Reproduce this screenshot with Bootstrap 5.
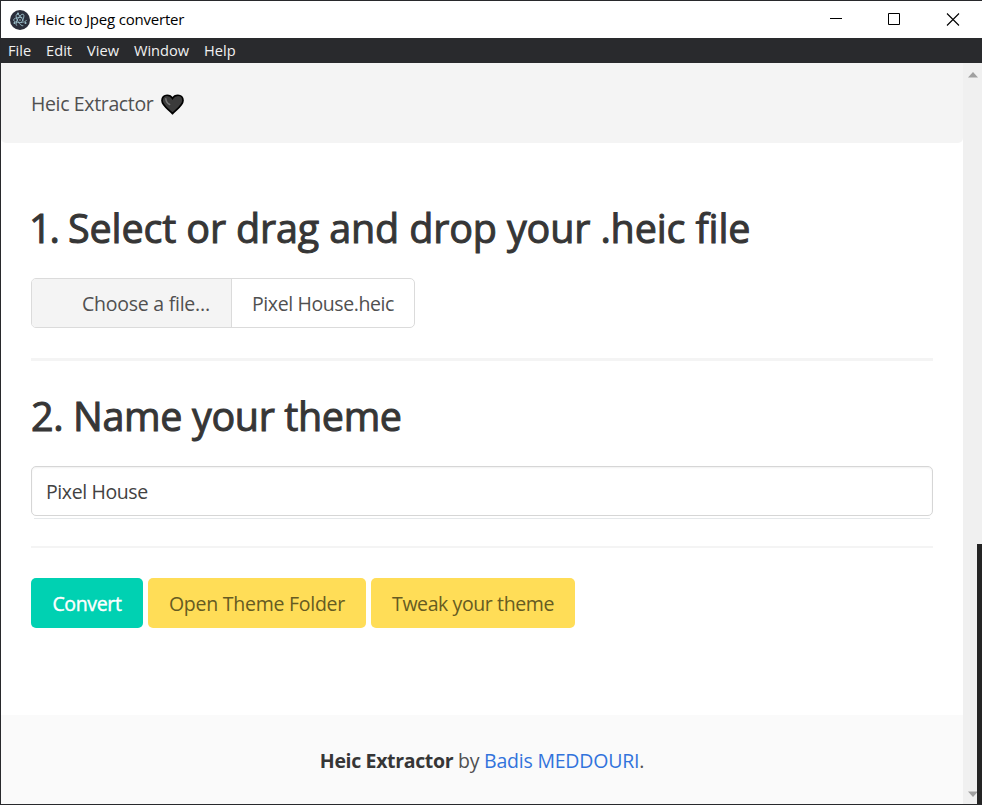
<!DOCTYPE html>
<html lang="en">
<head>
<meta charset="utf-8">
<title>Heic to Jpeg converter</title>
<link href="https://cdn.jsdelivr.net/npm/bootstrap@5.3.0/dist/css/bootstrap.min.css" rel="stylesheet">
<style>
body{font-family:"Open Sans","Noto Sans",sans-serif;font-size:19.5px;line-height:30px;color:#505050;background:#fff}
.app-window{height:805px;border:1px solid #28292c;border-right:0}
.title-bar{height:37px;color:#000;font-size:15px;padding-left:9px}
.title-bar .caption{letter-spacing:-.2px;margin:-2px 0 0 5px}
.controls{padding-right:22px;gap:44px}
.menu-bar{height:25px;background:#292a2d;color:#f1f1f1;font-size:14.6px;line-height:25px;padding-left:7px;gap:15px}
.pane{background:#fff}
.brand-bar{height:80px;background:#f4f4f4;border-radius:0 0 5px 5px;padding:2px 30px 0}
.brand-name{letter-spacing:-.36px}
.content{padding:60px 30px 0;height:572px}
.step-title{font-size:39.5px;line-height:50px;font-weight:400;color:#363636;margin:0;white-space:nowrap;-webkit-text-stroke:1px #363636}
.t1{letter-spacing:-.15px}
.n1{letter-spacing:-2px;margin-left:-2px}
.t2{letter-spacing:-.37px}
.file-picker{width:384px;height:50px;margin-top:25px;border:1px solid #dbdbdb;border-radius:5px;overflow:hidden}
.file-cta{width:200px;background:#f4f4f4;border-right:1px solid #dbdbdb;padding:2px 0 0 50px;letter-spacing:-.25px}
.file-label{padding:2px 0 0 20px;letter-spacing:-.4px}
.rule{background:#f4f4f4;height:3px;margin:30px 0 30px}
.rule-thin{height:2px;margin:27px 0 30px}
.theme-input{height:50px;margin-top:25px;border:1px solid #d6d6d6;border-radius:5px;padding:0 14px 0;font-size:19.5px;letter-spacing:-.4px;color:#424242;box-shadow:inset 0 1px 2px rgba(10,10,10,.06)}
.under-line{height:1px;background:#e5e8ea;margin:2px 3px 0}
.buttons{gap:5px}
.action{height:50px;border:0;border-radius:5px;padding:2px 0 0;font-size:19.5px;letter-spacing:-.25px}
.go{width:112px;background:#00d1b2;color:#fff;letter-spacing:-.35px;-webkit-text-stroke:.4px #fff}
.sun{background:#ffdd57;color:#665b22}
.w-open{width:218px}
.w-tweak{width:204px;letter-spacing:-.4px}
.site-footer{height:89px;background:#fafafa;padding-top:2px;letter-spacing:-.22px}
.site-footer strong{color:#363636;font-weight:700;letter-spacing:-.35px}
.site-footer a{color:#3273dc}
.scroll-track{width:19px;background:#f0f0f0;position:relative}
.scroll-track svg{position:absolute}
.arrow-up{left:5px;top:9px}.arrow-down{left:5px;bottom:7px}
.desk-edge{position:absolute;right:0;top:481px;bottom:0;width:5px;background:#242424}
</style>
</head>
<body>
<div class="app-window d-flex flex-column overflow-hidden">
  <header class="title-bar d-flex align-items-center">
    <svg width="20" height="20" viewBox="0 0 20 20"><circle cx="10" cy="10" r="10" fill="#2b2e3b"/><g fill="none" stroke="#9fc3cf" stroke-width=".8"><ellipse cx="10" cy="10" rx="6.5" ry="2.5" stroke-dasharray="24 5"/><ellipse cx="10" cy="10" rx="6.5" ry="2.5" transform="rotate(60 10 10)" stroke-dasharray="24 5"/><ellipse cx="10" cy="10" rx="6.5" ry="2.5" transform="rotate(120 10 10)" stroke-dasharray="24 5"/></g><g fill="#9fc3cf"><circle cx="10" cy="10" r=".8"/><circle cx="4.500" cy="13" r="1"/><circle cx="15.500" cy="13" r="1"/><circle cx="8" cy="3.600" r="1"/></g></svg>
    <span class="caption">Heic to Jpeg converter</span>
    <div class="controls d-flex ms-auto">
      <svg width="14" height="14"><path d="M0 5.500h12" stroke="#000"/></svg>
      <svg width="14" height="14"><path d="M.5.5h11v11H.5z" fill="none" stroke="#000"/></svg>
      <svg width="14" height="14"><path d="M1 0.500l12 12M13 .5L1 12.500" stroke="#000" stroke-width="1.100"/></svg>
    </div>
  </header>
  <nav class="menu-bar d-flex"><span>File</span><span>Edit</span><span>View</span><span>Window</span><span>Help</span></nav>
  <div class="d-flex flex-grow-1">
    <main class="pane flex-grow-1">
      <div class="brand-bar d-flex align-items-center">
        <span class="brand-name">Heic Extractor</span>
        <svg class="ms-2" width="23" height="21" viewBox="0 0 24 22"><path d="M12 20.500C8 16 1 12 1 6.800C1 3.500 3.300 1.300 6.300 1.300C9 1.300 11 2.800 12 4.500C13 2.800 15 1.300 17.700 1.300C20.700 1.300 23 3.500 23 6.800C23 12 16 16 12 20.500Z" fill="#3b3b3b" stroke="#000" stroke-width="1.800"/><path d="M5 5q.2 4 4 6" fill="none" stroke="#777" stroke-width="1.600" stroke-linecap="round"/></svg>
      </div>
      <div class="content">
        <h1 class="step-title"><span class="t1"><span class="n1">1.</span> Select or drag and drop your .heic file</span></h1>
        <div class="file-picker d-flex align-items-stretch">
          <div class="file-cta d-flex align-items-center">Choose a file…</div>
          <div class="file-label d-flex align-items-center">Pixel House.heic</div>
        </div>
        <div class="rule"></div>
        <h2 class="step-title"><span class="t2">2. Name your theme</span></h2>
        <input class="form-control theme-input" type="text" value="Pixel House">
        <div class="under-line"></div>
        <div class="rule rule-thin"></div>
        <div class="d-flex buttons">
          <button class="btn action go">Convert</button>
          <button class="btn action sun w-open">Open Theme Folder</button>
          <button class="btn action sun w-tweak">Tweak your theme</button>
        </div>
      </div>
      <footer class="site-footer d-flex align-items-center justify-content-center"><div><strong>Heic Extractor</strong> by <a href="#" class="text-decoration-none">Badis MEDDOURI</a>.</div></footer>
    </main>
    <aside class="scroll-track">
      <svg class="arrow-up" width="10" height="6"><path d="M0 5.500L5 0l5 5.500z" fill="#a0a0a0"/></svg>
      <svg class="arrow-down" width="10" height="6"><path d="M0 .5h10L5 6z" fill="#a0a0a0"/></svg>
      <div class="desk-edge"></div>
    </aside>
  </div>
</div>
<script src="https://cdn.jsdelivr.net/npm/bootstrap@5.3.0/dist/js/bootstrap.bundle.min.js"></script>
</body>
</html>
